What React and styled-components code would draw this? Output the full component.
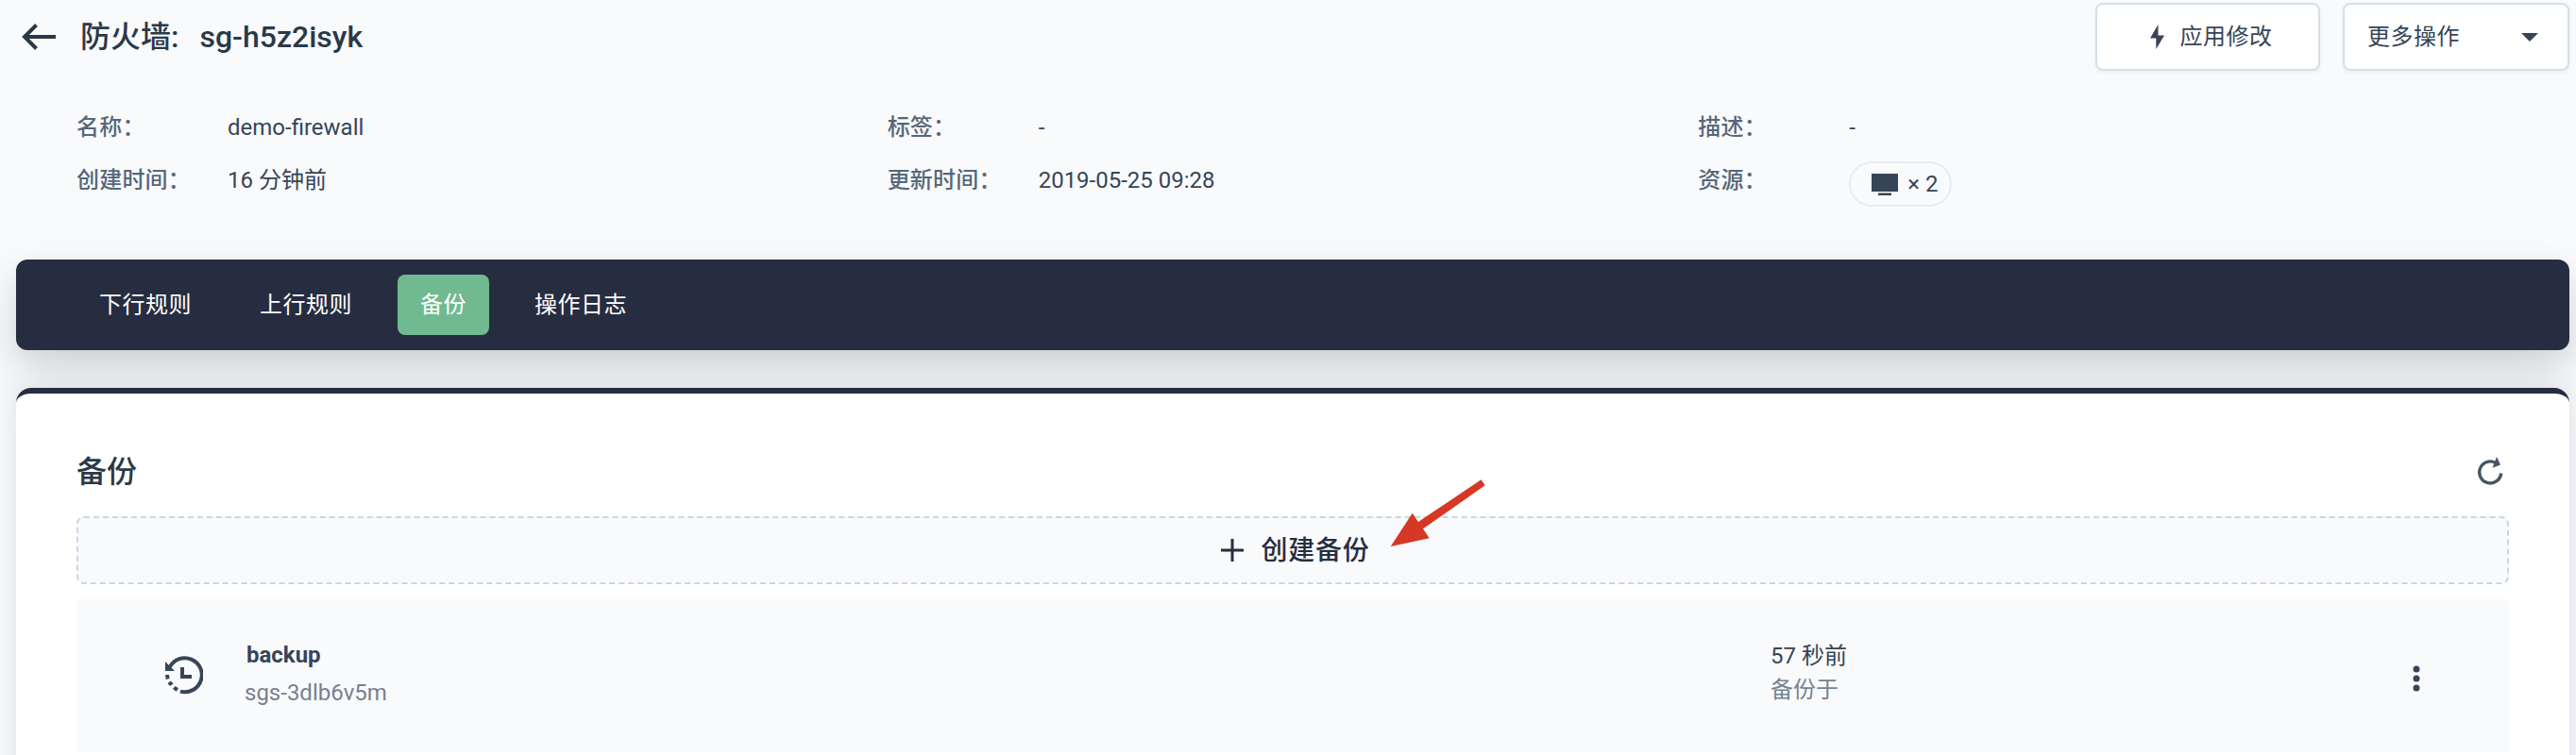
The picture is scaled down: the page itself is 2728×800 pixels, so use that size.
import React from "react";
import styled, { createGlobalStyle } from "styled-components";

const Global = createGlobalStyle`
  * { box-sizing: border-box; }
  html, body { margin: 0; height: 800px; overflow: hidden; background: #f9fafc; }
  body {
    font-family: Roboto, "Noto Sans CJK SC", sans-serif;
    font-size: 24px;
    line-height: 32px;
    color: #364557;
  }
  svg { display: block; flex: none; }
`;

const Page = styled.main`
  width: 2728px;
  height: 800px;
  overflow: hidden;
  padding: 3px 7px 0 17px;
`;

const Header = styled.header`
  display: flex;
  justify-content: space-between;
  height: 72px;
`;

const Heading = styled.div`
  display: flex;
  align-items: center;
  padding: 0 0 1px 6px;
`;

const Title = styled.h1`
  display: flex;
  gap: 22px;
  margin: 0 0 0 26px;
  font-size: 32px;
  font-weight: 500;
  line-height: 40px;
  color: #2a3947;
`;

const Actions = styled.div`
  display: flex;
  gap: 24px;
`;

const Button = styled.button`
  display: flex;
  align-items: center;
  justify-content: ${(p) => (p.$spread ? "space-between" : "center")};
  gap: 17px;
  width: ${(p) => p.$width}px;
  height: 72px;
  padding: ${(p) => (p.$spread ? "0 31px 0 24px" : "0 0 0 7px")};
  border: 2px solid #d5dfe7;
  border-radius: 8px;
  background: #fff;
  box-shadow: 0 2px 4px rgba(0, 0, 0, 0.05);
  font: inherit;
  letter-spacing: 0.5px;
  color: inherit;
`;

const Details = styled.dl`
  display: grid;
  grid-template-columns: repeat(3, 1fr);
  row-gap: 8px;
  margin: 36px 0 0;
  padding: 0 64px;
`;

const Detail = styled.div`
  display: flex;
  height: 48px;
  line-height: 48px;
`;

const Label = styled.dt`
  width: 160px;
  font-weight: 500;
  letter-spacing: 0.2px;
  color: #56677a;
`;

const Value = styled.dd`
  margin: 0;
`;

const Pill = styled.span`
  display: flex;
  align-items: center;
  gap: 10px;
  width: 109px;
  height: 48px;
  margin-top: 4px;
  padding-left: 22px;
  border: 2px solid #e6ecf3;
  border-radius: 24px;
`;

const Tabs = styled.nav`
  display: flex;
  align-items: center;
  gap: 24px;
  height: 96px;
  margin-top: 60px;
  padding: 0 64px;
  border-radius: 12px;
  background: #272d40;
  box-shadow: 0 30px 60px rgba(0, 0, 0, 0.11), 0 10px 30px rgba(0, 0, 0, 0.08);
`;

const Tab = styled.a`
  height: 64px;
  padding: 0 24px;
  border-radius: 8px;
  line-height: 65px;
  letter-spacing: 0.5px;
  color: #fff;
  background: ${(p) => (p.$active ? "#71b990" : "transparent")};
`;

const Card = styled.section`
  height: 460px;
  margin-top: 40px;
  padding: 0 64px;
  border-top: 6px solid #272d40;
  border-radius: 16px;
  background: #fff;
  box-shadow: 0 4px 30px rgba(50, 80, 100, 0.16);
`;

const CardHeader = styled.div`
  display: flex;
  align-items: center;
  justify-content: space-between;
  height: 40px;
  margin-top: 62px;
  padding-right: 6px;
`;

const CardTitle = styled.h2`
  margin: 0;
  padding-top: 2px;
  font-size: 32px;
  font-weight: 500;
  line-height: 40px;
  color: #2a3947;
`;

const CreateButton = styled.button`
  position: relative;
  display: flex;
  align-items: center;
  justify-content: center;
  gap: 18px;
  width: 100%;
  height: 72px;
  margin-top: 28px;
  padding: 0 0 0 6px;
  border: 2px dashed #c9d7e4;
  border-radius: 8px;
  background: #f9fafc;
  font: inherit;
  font-size: 28px;
  font-weight: 500;
  letter-spacing: 0.8px;
  color: #272d40;
`;

const CreateLabel = styled.span`
  padding-top: 2px;
`;

const Pointer = styled.svg`
  position: absolute;
  left: 1388px;
  top: -44px;
`;

const Row = styled.article`
  display: flex;
  align-items: center;
  height: 162px;
  margin-top: 16px;
  padding: 0 94px;
  background: #f9fafc;
`;

const Backup = styled.div`
  flex: none;
  width: 1616px;
  margin-left: 44px;
  padding-bottom: 4px;
  line-height: 40px;
`;

const Name = styled.div`
  padding-left: 2px;
  font-weight: 700;
`;

const Muted = styled.div`
  color: #758291;
`;

const Created = styled.div`
  flex: 1;
  padding-bottom: 6px;
  line-height: 36px;
`;

const MenuButton = styled.span`
  padding-top: 6px;
`;

const ArrowLeft = () => (
  <svg width="36" height="28" viewBox="0 0 36 28" fill="none" stroke="#2a3947" strokeWidth="4">
    <path d="M36 14H3M15.500 1.500L3 14l12.500 12.500" />
  </svg>
);

const Bolt = () => (
  <svg width="15" height="26" viewBox="0 0 15 26" fill="#364557">
    <path d="M8.500 0L0 14.500h6.300V26L15 11.500H8.500z" />
  </svg>
);

const Caret = () => (
  <svg width="18" height="9" viewBox="0 0 18 9" fill="#364557">
    <path d="M0 0h18L9 9z" />
  </svg>
);

const Monitor = () => (
  <svg width="28" height="23" viewBox="0 0 28 23" fill="#364557">
    <path d="M0 0h28v19H0zM7 20.500h14V23H7z" />
  </svg>
);

const Refresh = () => (
  <svg width="27" height="30" viewBox="0 0 27 30">
    <path d="M24.700 17.500A11.500 11.500 0 1 1 18.500 6.200" fill="none" stroke="#465567" strokeWidth="3.400" />
    <path d="M20 0l4 8.500-8.500 3.300z" fill="#465567" />
  </svg>
);

const Plus = () => (
  <svg width="24" height="24" viewBox="0 0 24 24" fill="none" stroke="#272d40" strokeWidth="3">
    <path d="M12 0v24M0 12h24" />
  </svg>
);

const History = () => (
  <svg width="40" height="42" viewBox="0 0 40 42" fill="#364557">
    <path d="M4.500 12.500A18 18 0 1 1 16 37.600" fill="none" stroke="#364557" strokeWidth="4" />
    <path d="M0 6v10h10zM16 12h4v8h8v4H16z" />
    <path d="M0 20h4l.6 4-3.800 1zM2.500 29l3.500-2.500 2.500 3L5 32zM8 35l2.500-3 3.500 2.200-2.300 3.600z" />
  </svg>
);

const More = () => (
  <svg width="8" height="28" viewBox="0 0 8 28" fill="#364557">
    <circle cx="4" cy="4" r="3.500" />
    <circle cx="4" cy="14" r="3.500" />
    <circle cx="4" cy="24" r="3.500" />
  </svg>
);

const details = [
  ["名称：", "demo-firewall"],
  ["标签：", "-"],
  ["描述：", "-"],
  ["创建时间：", "16 分钟前"],
  ["更新时间：", "2019-05-25 09:28"],
  ["资源：", <Pill key="res"><Monitor />× 2</Pill>],
];

const tabs = ["下行规则", "上行规则", "备份", "操作日志"];

export default function App() {
  return (
    <Page lang="zh-CN">
      <Global />
      <Header>
        <Heading>
          <ArrowLeft />
          <Title><span>防火墙:</span><span>sg-h5z2isyk</span></Title>
        </Heading>
        <Actions>
          <Button $width={238}><Bolt />应用修改</Button>
          <Button $width={240} $spread>更多操作<Caret /></Button>
        </Actions>
      </Header>
      <Details>
        {details.map(([label, value]) => (
          <Detail key={label}>
            <Label>{label}</Label>
            <Value>{value}</Value>
          </Detail>
        ))}
      </Details>
      <Tabs>
        {tabs.map((t) => <Tab key={t} $active={t === "备份"}>{t}</Tab>)}
      </Tabs>
      <Card>
        <CardHeader>
          <CardTitle>备份</CardTitle>
          <Refresh />
        </CardHeader>
        <CreateButton>
          <Plus /><CreateLabel>创建备份</CreateLabel>
          <Pointer width="106" height="76" viewBox="0 0 106 76" fill="#d53825">
            <path d="M1.700 74L24.700 38.700 31 48 97.500 3.300 101.700 9.300 36 55.300 42.700 65.300z" />
          </Pointer>
        </CreateButton>
        <Row>
          <History />
          <Backup>
            <Name>backup</Name>
            <Muted>sgs-3dlb6v5m</Muted>
          </Backup>
          <Created>
            <div>57 秒前</div>
            <Muted>备份于</Muted>
          </Created>
          <MenuButton><More /></MenuButton>
        </Row>
      </Card>
    </Page>
  );
}
